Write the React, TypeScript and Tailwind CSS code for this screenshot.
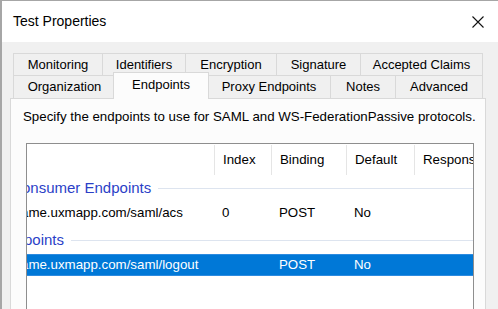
import React from 'react'

const rowOne = [
    { label: 'Monitoring', w: 'w-[89px]' },
    { label: 'Identifiers', w: 'w-[83px]' },
    { label: 'Encryption', w: 'w-[91px]' },
    { label: 'Signature', w: 'w-[84px]' },
    { label: 'Accepted Claims', w: 'w-[123px]' },
]

const rowTwo = [
    { label: 'Organization', w: 'w-[102px]' },
    { label: 'Endpoints', w: 'w-[92px]', active: true },
    { label: 'Proxy Endpoints', w: 'w-[123px]' },
    { label: 'Notes', w: 'w-[65px]' },
    { label: 'Advanced', w: 'w-[88px]' },
]

function Tab({ label, w, active, last }: { label: string; w: string; active?: boolean; last?: boolean }) {
    if (active) {
        return (
            <div className="relative z-10 -mx-[2px] -mt-[3px] -mb-px flex h-[27px] w-[96px] items-center justify-center border-x border-t border-[#d9d9d9] bg-[#fcfcfc] pb-[2px]">
                {label}
            </div>
        )
    }
    return (
        <div
            className={`flex h-full items-center justify-center border-l border-t border-[#d9d9d9] bg-[#f0f0f0] ${w} ${last ? 'border-r' : ''}`}
        >
            {label}
        </div>
    )
}

function Cells({ idx, binding, def }: { idx: string; binding: string; def: string }) {
    return (
        <>
            <div className="w-[57px] shrink-0 pl-[8px]">{idx}</div>
            <div className="w-[75px] shrink-0 pl-[8px]">{binding}</div>
            <div className="w-[68px] shrink-0 pl-[8px]">{def}</div>
        </>
    )
}

function GroupHeader({ text, shift, h }: { text: string; shift: string; h: string }) {
    return (
        <div className={`flex items-center ${h}`}>
            <span className={`whitespace-nowrap text-[15px] text-[#2b3fc7] ${shift}`}>{text}</span>
            <div className="ml-[7px] h-px flex-1 bg-[#dde4ef]" />
        </div>
    )
}

export default function App() {
    return (
        <div
            className="h-[309px] w-[498px] overflow-hidden border-l-2 border-t border-[#a6a6a6] bg-[#f0f0f0] text-[13px] text-black"
            style={{ fontFamily: '"Liberation Sans", Arial, sans-serif' }}
        >
            {/* Title bar */}
            <div className="flex h-[41px] items-center justify-between bg-white pl-[11px] pr-[14px]">
                <span className="text-[14px]">Test Properties</span>
                <svg width="12" height="12" viewBox="0 0 12 12" className="mt-px">
                    <path d="M0.5 0.5 L11.5 11.5 M11.5 0.5 L0.5 11.5" stroke="#111" strokeWidth="1.1" />
                </svg>
            </div>

            {/* Tabs */}
            <div className="mt-[11px] ml-[11px]">
                <div className="flex h-[22px]">
                    {rowOne.map((t, i) => (
                        <Tab key={t.label} label={t.label} w={t.w} last={i === rowOne.length - 1} />
                    ))}
                </div>
                <div className="flex h-[23px]">
                    {rowTwo.map((t, i) => (
                        <Tab key={t.label} label={t.label} w={t.w} active={t.active} last={i === rowTwo.length - 1} />
                    ))}
                </div>
            </div>

            {/* Page */}
            <div className="ml-[8px] h-[220px] w-[476px] border border-[#d9d9d9] bg-[#fcfcfc] text-[13.3px]">
                <div className="h-[26px] pl-[12px] pt-[10px] leading-[16px] whitespace-nowrap">
                    Specify the endpoints to use for SAML and WS-FederationPassive protocols.
                </div>

                {/* List view */}
                <div className="ml-[15px] mt-[18px] h-[200px] w-[448px] overflow-hidden border border-[#8e8e8e] bg-white">
                    <div className="flex h-[32px] items-center">
                        <div className="w-[187px] shrink-0" />
                        <div className="flex h-[30px] w-[57px] shrink-0 items-center border-l border-[#e5e5e5] pl-[8px]">Index</div>
                        <div className="flex h-[30px] w-[75px] shrink-0 items-center border-l border-[#e5e5e5] pl-[8px]">Binding</div>
                        <div className="flex h-[30px] w-[68px] shrink-0 items-center border-l border-[#e5e5e5] pl-[8px]">Default</div>
                        <div className="flex h-[30px] flex-1 items-center whitespace-nowrap border-l border-[#e5e5e5] pl-[8px]">Response URL</div>
                    </div>

                    <GroupHeader text="onsumer Endpoints" shift="-ml-[5px]" h="h-[24px]" />

                    <div className="flex h-[26px] items-center">
                        <div className="w-[187px] shrink-0 whitespace-nowrap">
                            <span className="-ml-[6px]">ame.uxmapp.com/saml/acs</span>
                        </div>
                        <Cells idx="0" binding="POST" def="No" />
                    </div>

                    <GroupHeader text="points" shift="-ml-[3px]" h="h-[28px]" />

                    <div className="flex h-[22px] items-center border-y border-[#2d8be0] bg-[#0078d7] text-white">
                        <div className="w-[187px] shrink-0 whitespace-nowrap">
                            <span className="-ml-[6px]">ame.uxmapp.com/saml/logout</span>
                        </div>
                        <Cells idx="" binding="POST" def="No" />
                    </div>
                </div>
            </div>
        </div>
    )
}
